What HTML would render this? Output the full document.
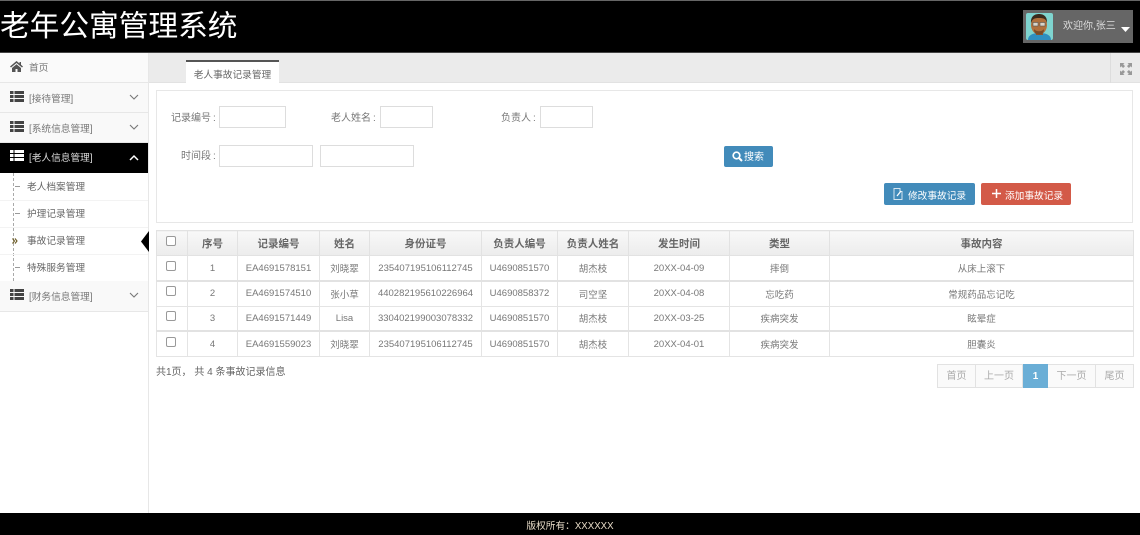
<!DOCTYPE html>
<html lang="zh-CN"><head><meta charset="utf-8"><title>老年公寓管理系统</title>
<style>
*{box-sizing:border-box}
html,body{margin:0;padding:0;width:1140px;height:535px;overflow:hidden;background:#fff;font-family:"Liberation Sans","Noto Sans CJK SC",sans-serif;font-size:10px;color:#666}
#wrap{position:absolute;left:0;top:0;width:1140px;height:535px;overflow:hidden;filter:blur(.3px)}
.a{position:absolute;white-space:nowrap}
#top{left:0;top:0;width:1140px;height:53px;background:#000;border-top:1px solid #666;border-bottom:1px solid #444}
#title{left:0;top:6px;font-size:29.700px;line-height:42px;color:#fff}
#user{left:1023px;top:10px;width:110px;height:33px;background:#666}
#side{left:0;top:53px;width:149px;height:460px;background:#fff;border-right:1px solid #e7e7e7}
.m{left:0;width:148px;height:30px;background:#f9f9f9;border-bottom:1px solid #e7e7e7;color:#777;font-size:9.700px}
.m span{position:absolute;left:29px;top:10px;line-height:14px}
.m svg{position:absolute}
.sub{left:27px;font-size:9.700px;line-height:14px;color:#666}
.dash{left:15px;width:5px;height:1px;background:#999}
#tabs{left:149px;top:53px;width:991px;height:30px;background:#ebebeb;border-bottom:1px solid #e2e2e2}
#tab{left:186px;top:60px;width:93px;height:23px;background:#fff;border-top:2px solid #555;font-size:9.700px;line-height:27px;text-align:center;color:#666}
#fs{left:1110px;top:53px;width:30px;height:30px;border-left:1px solid #ddd}
#box{left:156px;top:90px;width:977px;height:133px;border:1px solid #e7e7e7;background:#fff}
.l{font-size:10px;line-height:14px;color:#777}
.i{height:22px;border:1px solid #ddd;background:#fff}
.b{color:#fff;font-size:10px;line-height:22px;border-radius:2px;height:22px}
table{position:absolute;left:156px;top:230px;width:977px;height:127px;border-collapse:collapse;table-layout:fixed;border:1px solid #ddd}
th{height:25px;padding:0;border:1px solid #e2e2e2;font-size:10.500px;font-weight:bold;color:#666;background:linear-gradient(#f8f8f8,#ececec)}
td{padding:0;border:1px solid #e4e4e4;text-align:center;font-size:9.500px;color:#777;height:25px;white-space:nowrap}
tr.t td{border-top:2px solid #e2e2e2}
.c{display:inline-block;width:10px;height:10px;border:1px solid #999;border-radius:2px;background:#fff;position:relative;top:-1px;left:-1px}
#pg{left:937px;top:364px;height:24px;width:197px;border:1px solid #e2e2e2;background:#fafafa;display:flex;font-size:10px;line-height:23px;color:#aaa;text-align:center}
#pg div{border-right:1px solid #e2e2e2}
#foot{left:0;top:513px;width:1140px;height:22px;background:#000;color:#e8dcc8;font-size:9.700px;line-height:27px;text-align:center}
</style></head>
<body>
<div id="wrap">
<div class="a" id="top"></div>
<div class="a" id="title">老年公寓管理系统</div>
<div class="a" id="user"></div>
<svg class="a" style="left:1026px;top:13px" width="27" height="27" viewBox="0 0 27 27">
<rect width="27" height="27" rx="2" fill="#7fd4cf"/>
<path d="M2 27c0-5 5-7 11.500-7S25 22 25 27z" fill="#2f8fc0"/>
<rect x="10" y="16" width="7" height="6" fill="#8a5630"/>
<ellipse cx="13" cy="12" rx="8" ry="9.500" fill="#b0703c"/>
<path d="M5 10C4.500 3 9 1 13 1s8.500 2 8 9C20 6 18 5 13 5S6.500 6 5 10z" fill="#3a2a1c"/>
<path d="M8 16c2 3 8 3 10 0 0 4-2 5.500-5 5.500S8 20 8 16z" fill="#7a4c28"/>
<rect x="7" y="9.500" width="5" height="3.500" fill="#d9d4c8" stroke="#555" stroke-width=".6"/>
<rect x="14" y="9.500" width="5" height="3.500" fill="#d9d4c8" stroke="#555" stroke-width=".6"/>
</svg>
<div class="a" style="left:1063px;top:20px;font-size:10px;line-height:14px;color:#ddd">欢迎你,张三</div>
<svg class="a" style="left:1121px;top:27px" width="9" height="6"><path d="M0 0h9L4.500 5z" fill="#fff"/></svg>

<div class="a" id="side"></div>
<div class="a m" style="top:53px;height:30px;background:#fafafa"><svg style="left:10px;top:8px" width="13" height="11" viewBox="0 0 13 11"><path d="M6.500 0L0 5.500l1 1 5.500-4.500L12 6.500l1-1-2-1.700V1H9.500v1.500zM2 7v4h3.500V8h2v3H11V7L6.500 3.300z" fill="#555"/></svg><span style="top:9px;left:29px">首页</span></div>
<div class="a m" style="top:83px"><svg style="left:10px;top:8px" width="14" height="11"><path d="M0 0h3.500v3H0zM4.500 0H14v3H4.500zM0 4h3.500v3H0zM4.500 4H14v3H4.500zM0 8h3.500v3H0zM4.500 8H14v3H4.500z" fill="#444"/></svg><span>[接待管理]</span><svg style="left:129px;top:11px" width="10" height="7"><path d="M1 1l4 4 4-4" fill="none" stroke="#777" stroke-width="1.100"/></svg></div>
<div class="a m" style="top:113px"><svg style="left:10px;top:8px" width="14" height="11"><path d="M0 0h3.500v3H0zM4.500 0H14v3H4.500zM0 4h3.500v3H0zM4.500 4H14v3H4.500zM0 8h3.500v3H0zM4.500 8H14v3H4.500z" fill="#444"/></svg><span>[系统信息管理]</span><svg style="left:129px;top:11px" width="10" height="7"><path d="M1 1l4 4 4-4" fill="none" stroke="#777" stroke-width="1.100"/></svg></div>
<div class="a m" style="top:143px;background:#000;border:0;color:#ddd"><svg style="left:10px;top:7px" width="14" height="11"><path d="M0 0h3.500v3H0zM4.500 0H14v3H4.500zM0 4h3.500v3H0zM4.500 4H14v3H4.500zM0 8h3.500v3H0zM4.500 8H14v3H4.500z" fill="#fff"/></svg><span style="top:9px">[老人信息管理]</span><svg style="left:129px;top:11px" width="10" height="7"><path d="M1 6l4-4 4 4" fill="none" stroke="#fff" stroke-width="1.500"/></svg></div>
<div class="a" style="left:13px;top:173px;width:1px;height:108px;border-left:1px dashed #aaa"></div>
<div class="a" style="left:0;top:200px;width:148px;height:1px;background:#f3f3f3"></div>
<div class="a" style="left:0;top:227px;width:148px;height:1px;background:#f3f3f3"></div>
<div class="a" style="left:0;top:254px;width:148px;height:1px;background:#f3f3f3"></div>
<div class="a dash" style="top:186px"></div><div class="a dash" style="top:213px"></div><div class="a dash" style="top:267px"></div>
<div class="a sub" style="top:181px">老人档案管理</div>
<div class="a sub" style="top:208px">护理记录管理</div>
<svg class="a" style="left:12px;top:238px" width="6" height="6"><path d="M.5.500L2.500 3 .5 5.500M3 .5L5 3 3 5.500" fill="none" stroke="#6b5a24" stroke-width="1.100"/></svg>
<div class="a sub" style="top:235px">事故记录管理</div>
<div class="a sub" style="top:262px">特殊服务管理</div>
<svg class="a" style="left:141px;top:231px" width="8" height="21"><path d="M8 0v21L0 10.500z" fill="#000"/></svg>
<div class="a m" style="top:281px;height:31px"><svg style="left:10px;top:8px" width="14" height="11"><path d="M0 0h3.500v3H0zM4.500 0H14v3H4.500zM0 4h3.500v3H0zM4.500 4H14v3H4.500zM0 8h3.500v3H0zM4.500 8H14v3H4.500z" fill="#444"/></svg><span style="top:10px">[财务信息管理]</span><svg style="left:129px;top:11px" width="10" height="7"><path d="M1 1l4 4 4-4" fill="none" stroke="#777" stroke-width="1.100"/></svg></div>

<div class="a" id="tabs"></div>
<div class="a" id="tab">老人事故记录管理</div>
<div class="a" id="fs"><svg style="position:absolute;left:9px;top:10px" width="12" height="12" viewBox="0 0 12 12"><path d="M0 0h4.500L3.200 1.300 5 3.100 3.100 5 1.300 3.200 0 4.500zM12 0v4.500l-1.300-1.300L8.900 5 7 3.100l1.800-1.800L7.500 0zM0 12V7.500l1.300 1.300L3.100 7 5 8.900l-1.800 1.800L4.500 12zM12 12H7.500l1.300-1.300L7 8.900 8.900 7l1.800 1.800L12 7.500z" fill="#999"/></svg></div>

<div class="a" id="box"></div>
<div class="a l" style="left:171px;top:112px">记录编号&#8201;:</div>
<div class="a i" style="left:219px;top:106px;width:67px"></div>
<div class="a l" style="left:331px;top:112px">老人姓名&#8201;:</div>
<div class="a i" style="left:380px;top:106px;width:53px"></div>
<div class="a l" style="left:501px;top:112px">负责人&#8201;:</div>
<div class="a i" style="left:540px;top:106px;width:53px"></div>
<div class="a l" style="left:181px;top:150px">时间段&#8201;:</div>
<div class="a i" style="left:219px;top:145px;width:94px"></div>
<div class="a i" style="left:320px;top:145px;width:94px"></div>
<div class="a b" style="left:724px;top:146px;width:49px;height:21px;background:#428bba"></div>
<svg class="a" style="left:732px;top:151px" width="11" height="11" viewBox="0 0 11 11"><circle cx="4.500" cy="4.500" r="3.300" fill="none" stroke="#fff" stroke-width="1.700"/><path d="M7 7l3 3" stroke="#fff" stroke-width="2"/></svg>
<div class="a" style="left:744px;top:151px;font-size:10px;line-height:14px;color:#fff">搜索</div>
<div class="a b" style="left:884px;top:183px;width:91px;background:#428bba"></div>
<svg class="a" style="left:893px;top:188px" width="11" height="12" viewBox="0 0 11 12"><path d="M1 .5h6v3h2v8H1z" fill="none" stroke="#d5e6f0"/><path d="M4 8l4-5" stroke="#fff" stroke-width="1.300"/></svg>
<div class="a" style="left:908px;top:190px;font-size:9.700px;line-height:14px;color:#fff">修改事故记录</div>
<div class="a b" style="left:981px;top:183px;width:90px;background:#d35a48"></div>
<svg class="a" style="left:992px;top:189px" width="9" height="9"><path d="M3.750 0h1.500v3.750H9v1.500H5.250V9h-1.500V5.250H0v-1.500h3.750z" fill="#fff"/></svg>
<div class="a" style="left:1005px;top:190px;font-size:9.700px;line-height:14px;color:#fff">添加事故记录</div>

<table>
<colgroup><col style="width:31px"><col style="width:50px"><col style="width:82px"><col style="width:50px"><col style="width:112px"><col style="width:76px"><col style="width:71px"><col style="width:101px"><col style="width:100px"><col style="width:304px"></colgroup>
<tr><th><i class="c"></i></th><th>序号</th><th>记录编号</th><th>姓名</th><th>身份证号</th><th>负责人编号</th><th>负责人姓名</th><th>发生时间</th><th>类型</th><th>事故内容</th></tr>
<tr><td><i class="c"></i></td><td>1</td><td>EA4691578151</td><td>刘晓翠</td><td>235407195106112745</td><td>U4690851570</td><td>胡杰枝</td><td>20XX-04-09</td><td>摔倒</td><td>从床上滚下</td></tr>
<tr class="t"><td><i class="c"></i></td><td>2</td><td>EA4691574510</td><td>张小草</td><td>440282195610226964</td><td>U4690858372</td><td>司空坚</td><td>20XX-04-08</td><td>忘吃药</td><td>常规药品忘记吃</td></tr>
<tr><td><i class="c"></i></td><td>3</td><td>EA4691571449</td><td>Lisa</td><td>330402199003078332</td><td>U4690851570</td><td>胡杰枝</td><td>20XX-03-25</td><td>疾病突发</td><td>眩晕症</td></tr>
<tr class="t"><td><i class="c"></i></td><td>4</td><td>EA4691559023</td><td>刘晓翠</td><td>235407195106112745</td><td>U4690851570</td><td>胡杰枝</td><td>20XX-04-01</td><td>疾病突发</td><td>胆囊炎</td></tr>
</table>
<div class="a" style="left:156px;top:366px;font-size:10px;line-height:14px;color:#666">共1页， 共 4 条事故记录信息</div>
<div class="a" id="pg"><div style="width:38px">首页</div><div style="width:47px">上一页</div><div style="width:25px;background:#6aaed6;color:#fff;font-weight:bold;border:0;margin:-1px 0;line-height:25px">1</div><div style="width:48px">下一页</div><div style="width:37px;border:0">尾页</div></div>
<div class="a" id="foot">版权所有：XXXXXX</div>
</div>
</body></html>
